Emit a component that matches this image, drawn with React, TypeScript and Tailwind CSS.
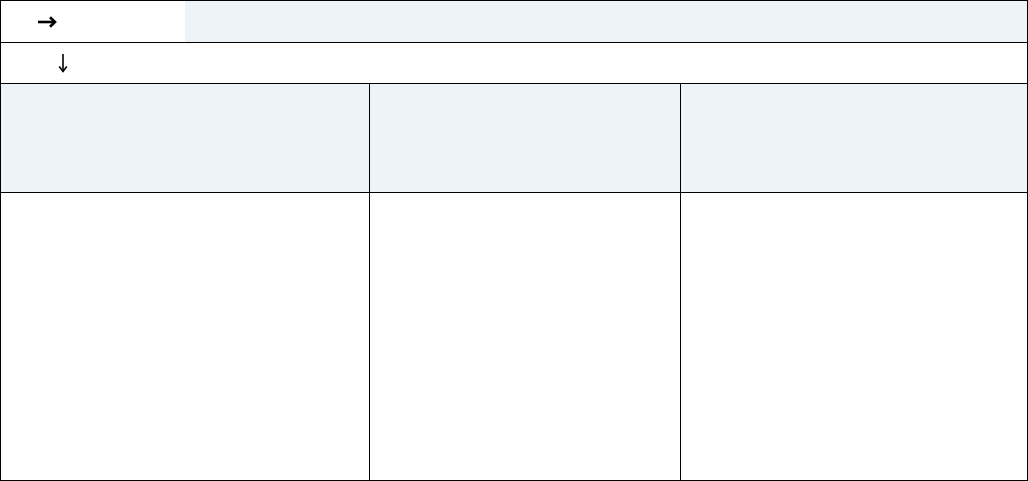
export default function App() {
    return (
        <div className="w-[1028px] h-[481px] bg-white border border-black flex flex-col font-['Liberation_Sans',sans-serif]">
            {/* top row: arrow cell + filler */}
            <div className="h-[42px] flex border-b border-black">
                <div className="w-[184px] flex items-center pl-[36px] pt-[1px]">
                    <svg width="20" height="12" viewBox="0 0 20 12" fill="none" stroke="black" strokeWidth="2.6">
                        <path d="M1 6 H18" />
                        <path d="M13 1.2 L18 6 L13 10.8" strokeLinejoin="miter" />
                    </svg>
                </div>
                <div className="flex-1 bg-[#eef3f8]" />
            </div>

            <div className="h-[41px] flex items-center border-b border-black pl-[57px]">
                <svg width="10" height="20" viewBox="0 0 10 20" fill="none" stroke="black" strokeWidth="1.6">
                    <path d="M5 1 V18.5" />
                    <path d="M1.2 13.5 L5 18.5 L8.8 13.5" />
                </svg>
            </div>

            {/* header row */}
            <div className="h-[109px] flex border-b border-black bg-[#eef3f8]">
                <div className="w-[369px] border-r border-black" />
                <div className="w-[311px] border-r border-black" />
                <div className="flex-1" />
            </div>

            {/* body row */}
            <div className="flex-1 flex">
                <div className="w-[369px] border-r border-black" />
                <div className="w-[311px] border-r border-black" />
                <div className="flex-1" />
            </div>
        </div>
    );
}
